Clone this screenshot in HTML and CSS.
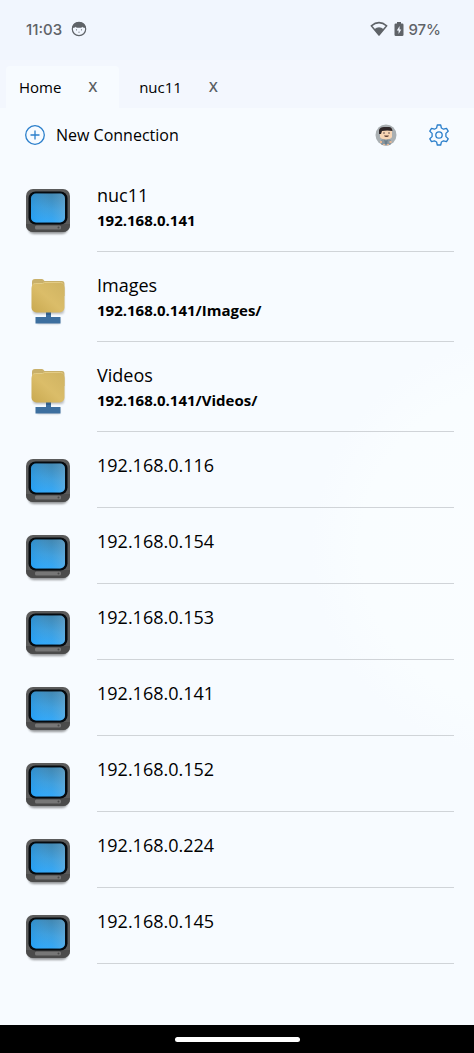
FILE: index.html
```html
<!DOCTYPE html>
<html lang="en">
<head>
<meta charset="utf-8">
<meta name="viewport" content="width=device-width, initial-scale=1">
<title>Connections</title>
<link rel="stylesheet" href="styles.css">
</head>
<body>
<svg class="defs" aria-hidden="true">
  <defs>
    <linearGradient id="screen" x1="0.3" y1="1" x2="0.5" y2="0">
      <stop offset="0" stop-color="#2ba8ff"/><stop offset="0.5" stop-color="#3a9cdc"/><stop offset="1" stop-color="#3d83ae"/>
    </linearGradient>
    <linearGradient id="glare" x1="0" y1="0.4" x2="1" y2="0.4">
      <stop offset="0" stop-color="#1b95ea" stop-opacity=".4"/><stop offset="0.6" stop-color="#6db6e2" stop-opacity=".1"/><stop offset="1" stop-color="#8bbfe0" stop-opacity=".4"/>
    </linearGradient>
    <linearGradient id="folder" x1="0" y1="1" x2="1" y2="0">
      <stop offset="0" stop-color="#c9a950"/><stop offset="0.5" stop-color="#dbbd69"/><stop offset="1" stop-color="#cfb362"/>
    </linearGradient>
    <filter id="soft" x="-20%" y="-20%" width="140%" height="150%"><feGaussianBlur stdDeviation="1.2"/></filter>
    <symbol id="computer" viewBox="0 0 48 50">
      <rect x="4" y="8" width="40" height="39" rx="6" fill="#000" opacity=".4" filter="url(#soft)"/>
      <rect x="2" y="2" width="44" height="43" rx="7" fill="#5b5b5b"/>
      <path d="M2 37v1a7 7 0 0 0 7 7h30a7 7 0 0 0 7-7v-1z" fill="#4b4b4b"/>
      <rect x="4.500" y="4.500" width="39" height="33" rx="7" fill="#050a0f"/>
      <rect x="7" y="6.500" width="34" height="29" rx="5" fill="url(#screen)"/>
      <rect x="7" y="6.500" width="34" height="29" rx="5" fill="url(#glare)"/>
      <rect x="11" y="38.500" width="26" height="4" rx="1.500" fill="#777"/>
      <circle cx="34.500" cy="40.500" r="1" fill="#4b4b4b"/>
    </symbol>
    <symbol id="share" viewBox="0 0 48 50">
      <rect x="9" y="9" width="31" height="28" rx="3" fill="#000" opacity=".25" filter="url(#soft)"/>
      <rect x="13" y="42" width="23" height="5" fill="#000" opacity=".2" filter="url(#soft)"/>
      <path d="M22 34h5v6h9.500v6.500h-25V40H22z" fill="#3d6f9f"/>
      <path d="M22 35h5v3h-5z" fill="#315f8c"/>
      <path d="M8 5q0-3 3-3h7q1.500 0 2 1.500l.5.500h17.500q2.500 0 2.500 3v12H8z" fill="#c9b06a"/>
      <rect x="7.500" y="6" width="33" height="29.500" rx="5" fill="url(#folder)"/>
      <path d="M8.500 8q1-1.500 3-1.500h7l2-1h16q2 0 3 1.500" fill="none" stroke="#e3cc86"/>
    </symbol>
  </defs>
</svg>
<div class="app">
  <header class="status">
    <span>11:03</span>
    <svg class="status-face" viewBox="0 0 16 16"><circle cx="8" cy="8" r="6.700" fill="none" stroke="#5f6368" stroke-width="1.200"/><path d="M1.200 7C1.500 3 5 1 8 1s6.500 2 6.800 6L12 6.500l-.8-.8-.8 1H5.600l-.8-1-.8.800z" fill="#5f6368"/><circle cx="5.500" cy="8.800" r=".6" fill="#5f6368"/><circle cx="10.500" cy="8.800" r=".6" fill="#5f6368"/><path d="M7 11.200h2" stroke="#5f6368" stroke-width=".5"/></svg>
    <span class="status-right">
      <svg class="wifi" viewBox="0 0 18 16"><path d="M1.300 4.800Q9-1.600 16.700 4.800L9 14z" fill="none" stroke="#5f6368" stroke-width="1.500" stroke-linejoin="round"/><path d="M4.300 8.200Q9 4.400 13.700 8.200L9 14.500z" fill="#5f6368"/></svg>
      <svg class="battery" viewBox="0 0 10 16"><path d="M3 1h4v1.500h1.200q1.300 0 1.300 1.300v10q0 1.200-1.300 1.200H1.800Q.5 15 .5 13.800v-10q0-1.300 1.300-1.300H3z" fill="#5f6368"/><path d="M5.600 5 2.800 9.500h1.800V13l2.700-4.600H5.600z" fill="#f1f6fe"/></svg>
      <span>97%</span>
    </span>
  </header>
  <nav class="tabs">
    <div class="tab tab-active"><button class="tab-name">Home</button><button class="tab-close" aria-label="Close Home">X</button></div>
    <div class="tab"><button class="tab-name">nuc11</button><button class="tab-close" aria-label="Close nuc11">X</button></div>
  </nav>
  <div class="toolbar">
    <button class="new"><svg class="plus" viewBox="0 0 20 20"><circle cx="10" cy="10" r="9.300"/><path d="M10 5.500v9M5.500 10h9"/></svg>New Connection</button>
    <button class="round" aria-label="Account"><svg class="avatar" viewBox="0 0 22 22"><clipPath id="disc"><circle cx="11" cy="11" r="10.500"/></clipPath><g clip-path="url(#disc)"><path d="M0 0h22v22H0z" fill="#a9afb2"/><path d="M6 22v-6q5-3 10 0v6z" fill="#8a979f"/><path d="m9 15 2 2 2-2-1 5h-2z" fill="#6d7f8b"/><path d="M5 17h2v2H5zM14.500 17h2v2h-2zM8 20h2v2H8zM12 20h2v2h-2z" fill="#e6b795"/><path d="M5 7q6-2 12 0v6q-1 2-6 2.500-5-.5-6-2.500z" fill="#f8d5b4"/><path d="M4 10V6q1-3 5-3h5q3 0 3.500 4-5-1-10.500 0L6 10z" fill="#30282a"/><path d="M8 9h2M13 9h2" stroke="#6a5450"/><path d="M9 11.500h5q-.5 1.500-2.500 1.500T9 11.500z" fill="#5c3e34"/></g></svg></button>
    <button class="round" aria-label="Settings"><svg class="gear" viewBox="0 0 22 22"><path d="M9.300 1h3.400l.7 3 2.100 1.200 3-.9 1.700 2.900-2.300 2.200v3.200l2.300 2.200-1.700 2.900-3-.9-2.100 1.200-.7 3H9.300l-.7-3-2.100-1.200-3 .9-1.700-2.900 2.300-2.200V9.400L1.800 7.200l1.700-2.900 3 .9L8.600 4z"/><circle cx="11" cy="11" r="3.200"/></svg></button>
  </div>
  <main class="list">
    <a class="row" href="#"><svg class="icon"><use href="#computer"/></svg><span class="text"><span class="title">nuc11</span><b class="path">192.168.0.141</b></span></a>
    <a class="row" href="#"><svg class="icon"><use href="#share"/></svg><span class="text"><span class="title">Images</span><b class="path">192.168.0.141/Images/</b></span></a>
    <a class="row" href="#"><svg class="icon"><use href="#share"/></svg><span class="text"><span class="title">Videos</span><b class="path">192.168.0.141/Videos/</b></span></a>
    <a class="row" href="#"><svg class="icon"><use href="#computer"/></svg><span class="text"><span class="title">192.168.0.116</span></span></a>
    <a class="row" href="#"><svg class="icon"><use href="#computer"/></svg><span class="text"><span class="title">192.168.0.154</span></span></a>
    <a class="row" href="#"><svg class="icon"><use href="#computer"/></svg><span class="text"><span class="title">192.168.0.153</span></span></a>
    <a class="row" href="#"><svg class="icon"><use href="#computer"/></svg><span class="text"><span class="title">192.168.0.141</span></span></a>
    <a class="row" href="#"><svg class="icon"><use href="#computer"/></svg><span class="text"><span class="title">192.168.0.152</span></span></a>
    <a class="row" href="#"><svg class="icon"><use href="#computer"/></svg><span class="text"><span class="title">192.168.0.224</span></span></a>
    <a class="row" href="#"><svg class="icon"><use href="#computer"/></svg><span class="text"><span class="title">192.168.0.145</span></span></a>
  </main>
  <footer class="navbar"><span class="handle"></span></footer>
</div>
</body>
</html>
```
FILE: styles.css
```css
* { box-sizing: border-box; }
body { margin: 0; background: #f7fbff; color: #000; font-family: "Open Sans", "Noto Sans", sans-serif; }
button { border: 0; padding: 0; background: none; font: inherit; color: inherit; }
svg { display: block; flex: none; }
.defs { position: absolute; width: 0; height: 0; }
.app { min-height: 100vh; display: flex; flex-direction: column; background: radial-gradient(circle at 110% 52%, #fafdff 0, #f9fdff 160px, #f7fbff 210px); }
.status { display: flex; align-items: center; height: 60px; padding: 0 33px 2px 26px; background: #f1f6fe; color: #5f6368; font: 500 15px Inter, sans-serif; }
.status-face { width: 16px; height: 16px; margin-left: 9px; }
.status-right { display: flex; align-items: center; margin-left: auto; }
.wifi { width: 18px; height: 16px; }
.battery { width: 10px; height: 16px; margin: 0 4px 0 6px; }
.tabs { display: flex; gap: 7px; padding: 6px 0 0 6px; background: #f3f7fe; font-size: 15px; line-height: 20px; }
.tab { display: flex; align-items: center; height: 42px; padding: 0 22px 1px 13px; gap: 27px; }
.tab-active { background: #f7fbff; border-radius: 4px 4px 0 0; }
.tab-close { color: #5a5e62; font-size: 14px; font-weight: 600; }
.toolbar { display: flex; align-items: center; gap: 31px; height: 54px; padding: 0 24px 1px 25px; }
.new { display: flex; align-items: center; gap: 11px; margin-right: auto; font-size: 16px; line-height: 24px; }
.plus { width: 20px; height: 20px; }
.plus, .gear { fill: none; stroke: #2b7fcb; stroke-width: 1.3; stroke-linejoin: round; }
.avatar, .gear { width: 22px; height: 22px; }
.row { display: flex; gap: 25px; padding: 0 20px 0 24px; color: inherit; text-decoration: none; }
.icon { width: 48px; height: 50px; margin-top: 25px; }
.text { flex: 1; min-width: 0; min-height: 76px; display: flex; flex-direction: column; padding: 20px 0 19px; border-bottom: 1px solid #d0d4d8; }
.title { font-size: 18px; line-height: 26px; }
.path { font-size: 15px; line-height: 24px; }
.navbar { display: flex; align-items: center; justify-content: center; height: 28px; margin-top: auto; background: #000; }
.handle { width: 125px; height: 5px; border-radius: 3px; background: #fff; }
```
